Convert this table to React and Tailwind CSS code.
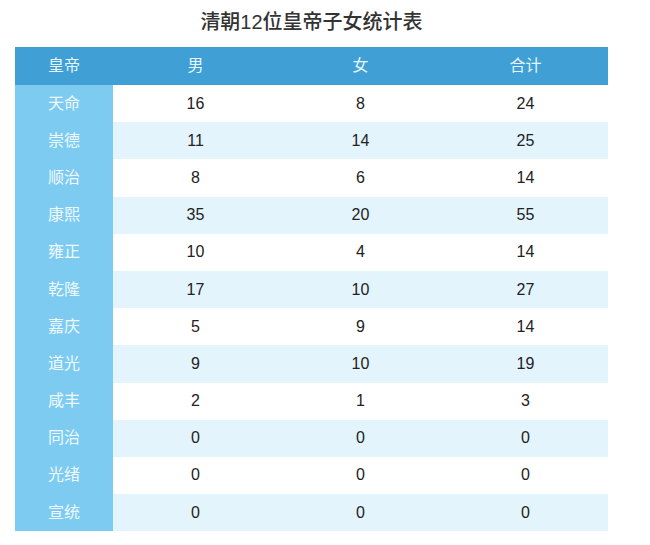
const rows = [
  ["天命", 16, 8, 24],
  ["崇德", 11, 14, 25],
  ["顺治", 8, 6, 14],
  ["康熙", 35, 20, 55],
  ["雍正", 10, 4, 14],
  ["乾隆", 17, 10, 27],
  ["嘉庆", 5, 9, 14],
  ["道光", 9, 10, 19],
  ["咸丰", 2, 1, 3],
  ["同治", 0, 0, 0],
  ["光绪", 0, 0, 0],
  ["宣统", 0, 0, 0],
];

export default function App() {
  return (
    <main
      className="w-[650px] h-[545px] bg-white"
      style={{ fontFamily: '"Liberation Sans", "Noto Sans CJK SC", sans-serif' }}
    >
      <div className="ml-[15px] w-[593px]">
        <h1 className="h-[47px] pb-[4px] flex items-center justify-center text-[20px] font-medium text-[#333]">
          清朝12位皇帝子女统计表
        </h1>
        <div className="grid grid-cols-[98px_165px_165px_165px] h-[38px] bg-[#409fd5] text-[#e6f6ff] text-[16px]">
          <div className="flex items-center justify-center">皇帝</div>
          <div className="flex items-center justify-center">男</div>
          <div className="flex items-center justify-center">女</div>
          <div className="flex items-center justify-center">合计</div>
        </div>
        {rows.map((row, i) => (
          <div
            key={row[0]}
            className={
              "grid grid-cols-[98px_165px_165px_165px] h-[37.2px] text-[16px] text-[#222] " +
              (i % 2 === 1 ? "bg-[#e3f4fd]" : "bg-white")
            }
          >
            <div className="flex items-center justify-center bg-[#7ecbf1] text-[#eef9ff]">
              {row[0]}
            </div>
            <div className="flex items-center justify-center">{row[1]}</div>
            <div className="flex items-center justify-center">{row[2]}</div>
            <div className="flex items-center justify-center">{row[3]}</div>
          </div>
        ))}
      </div>
    </main>
  );
}
